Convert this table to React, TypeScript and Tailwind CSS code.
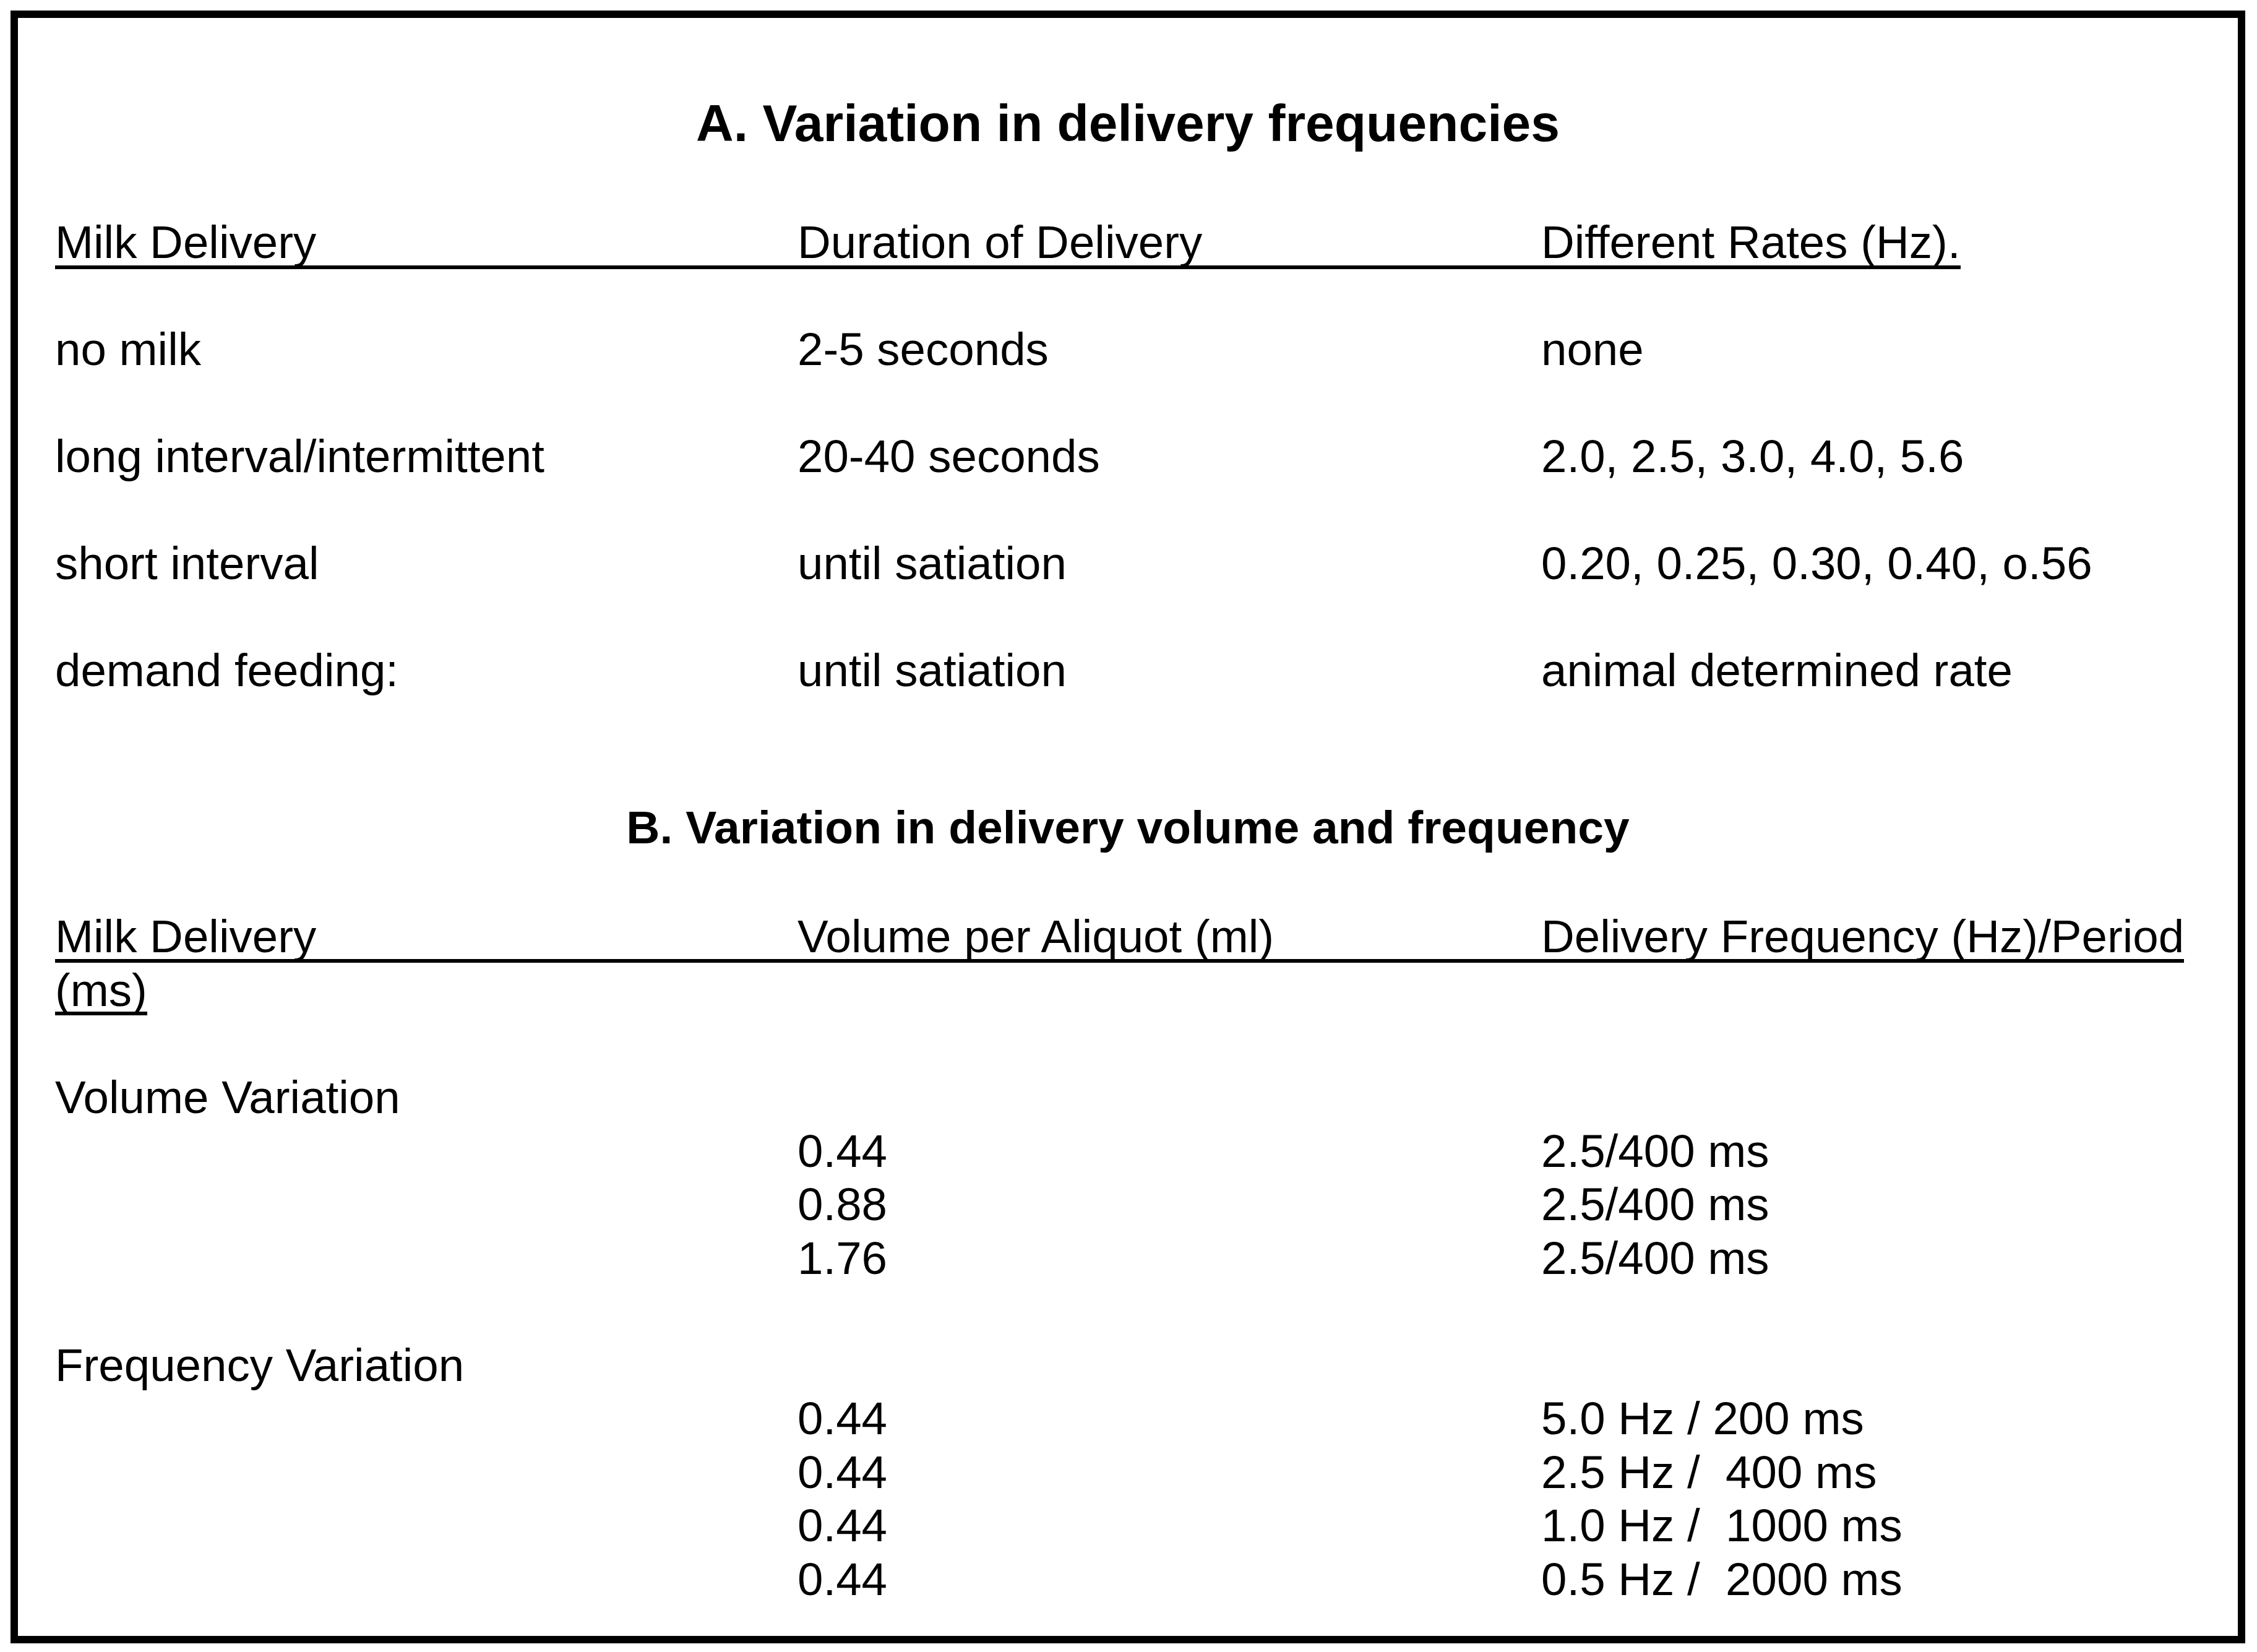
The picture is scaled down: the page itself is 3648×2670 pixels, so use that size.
import React from 'react';

// Rows of section A: milk delivery, duration, rates
const rowsA: [string, string, string][] = [
  ['no milk', '2-5 seconds', 'none'],
  ['long interval/intermittent', '20-40 seconds', '2.0, 2.5, 3.0, 4.0, 5.6'],
  ['short interval', 'until satiation', '0.20, 0.25, 0.30, 0.40, o.56'],
  ['demand feeding:', 'until satiation', 'animal determined rate'],
];

const volumeRows: [string, string][] = [
  ['0.44', '2.5/400 ms'],
  ['0.88', '2.5/400 ms'],
  ['1.76', '2.5/400 ms'],
];

const frequencyRows: [string, string][] = [
  ['0.44', '5.0 Hz / 200 ms'],
  ['0.44', '2.5 Hz /  400 ms'],
  ['0.44', '1.0 Hz /  1000 ms'],
  ['0.44', '0.5 Hz /  2000 ms'],
];

function Row({ cells }: { cells: [string, string, string] }) {
  return (
    <div className="flex h-[86.5px] whitespace-pre">
      <div className="w-[1200px] shrink-0">{cells[0]}</div>
      <div className="w-[1202px] shrink-0">{cells[1]}</div>
      <div>{cells[2]}</div>
    </div>
  );
}

// Header row with a single underline running under all three columns
function HeaderRow({ cells, height }: { cells: [string, string, string]; height: string }) {
  return (
    <div className={`flex w-fit whitespace-pre border-b-[6px] border-black ${height}`}>
      <div className="w-[1200px] shrink-0">{cells[0]}</div>
      <div className="w-[1202px] shrink-0">{cells[1]}</div>
      <div>{cells[2]}</div>
    </div>
  );
}

export default function App() {
  return (
    <div className="w-[3648px] h-[2670px] bg-white pl-[17px] pt-[17px] text-black font-['Liberation_Sans',Arial,Helvetica,sans-serif]">
      <div className="flex h-[2639px] w-[3612px] flex-col border-[12px] border-black text-[74.5px] leading-[86.5px]">
        {/* Section A */}
        <h1 className="mt-[122px] text-center text-[84px] font-bold leading-[96px]">
          A. Variation in delivery frequencies
        </h1>

        <div className="mt-[102px] pl-[60px]">
          <HeaderRow
            cells={['Milk Delivery', 'Duration of Delivery', 'Different Rates (Hz).']}
            height="h-[86px]"
          />
          <div className="mt-[86.5px] flex flex-col gap-[86.5px]">
            {rowsA.map((r) => (
              <Row key={r[0]} cells={r} />
            ))}
          </div>
        </div>

        {/* Section B */}
        <h2 className="mt-[167px] text-center text-[75px] font-bold leading-[86.5px]">
          B. Variation in delivery volume and frequency
        </h2>

        <div className="mt-[90.5px] pl-[60px]">
          <HeaderRow
            cells={['Milk Delivery', 'Volume per Aliquot (ml)', 'Delivery Frequency (Hz)/Period']}
            height="h-[85px]"
          />
          <div className="mt-[2px] h-[83px] w-fit border-b-[6px] border-black">(ms)</div>

          <div className="mt-[90px]">
            <Row cells={['Volume Variation', '', '']} />
            {volumeRows.map((r, i) => (
              <Row key={i} cells={['', r[0], r[1]]} />
            ))}
          </div>

          <div className="mt-[86.5px]">
            <Row cells={['Frequency Variation', '', '']} />
            {frequencyRows.map((r, i) => (
              <Row key={i} cells={['', r[0], r[1]]} />
            ))}
          </div>
        </div>
      </div>
    </div>
  );
}
